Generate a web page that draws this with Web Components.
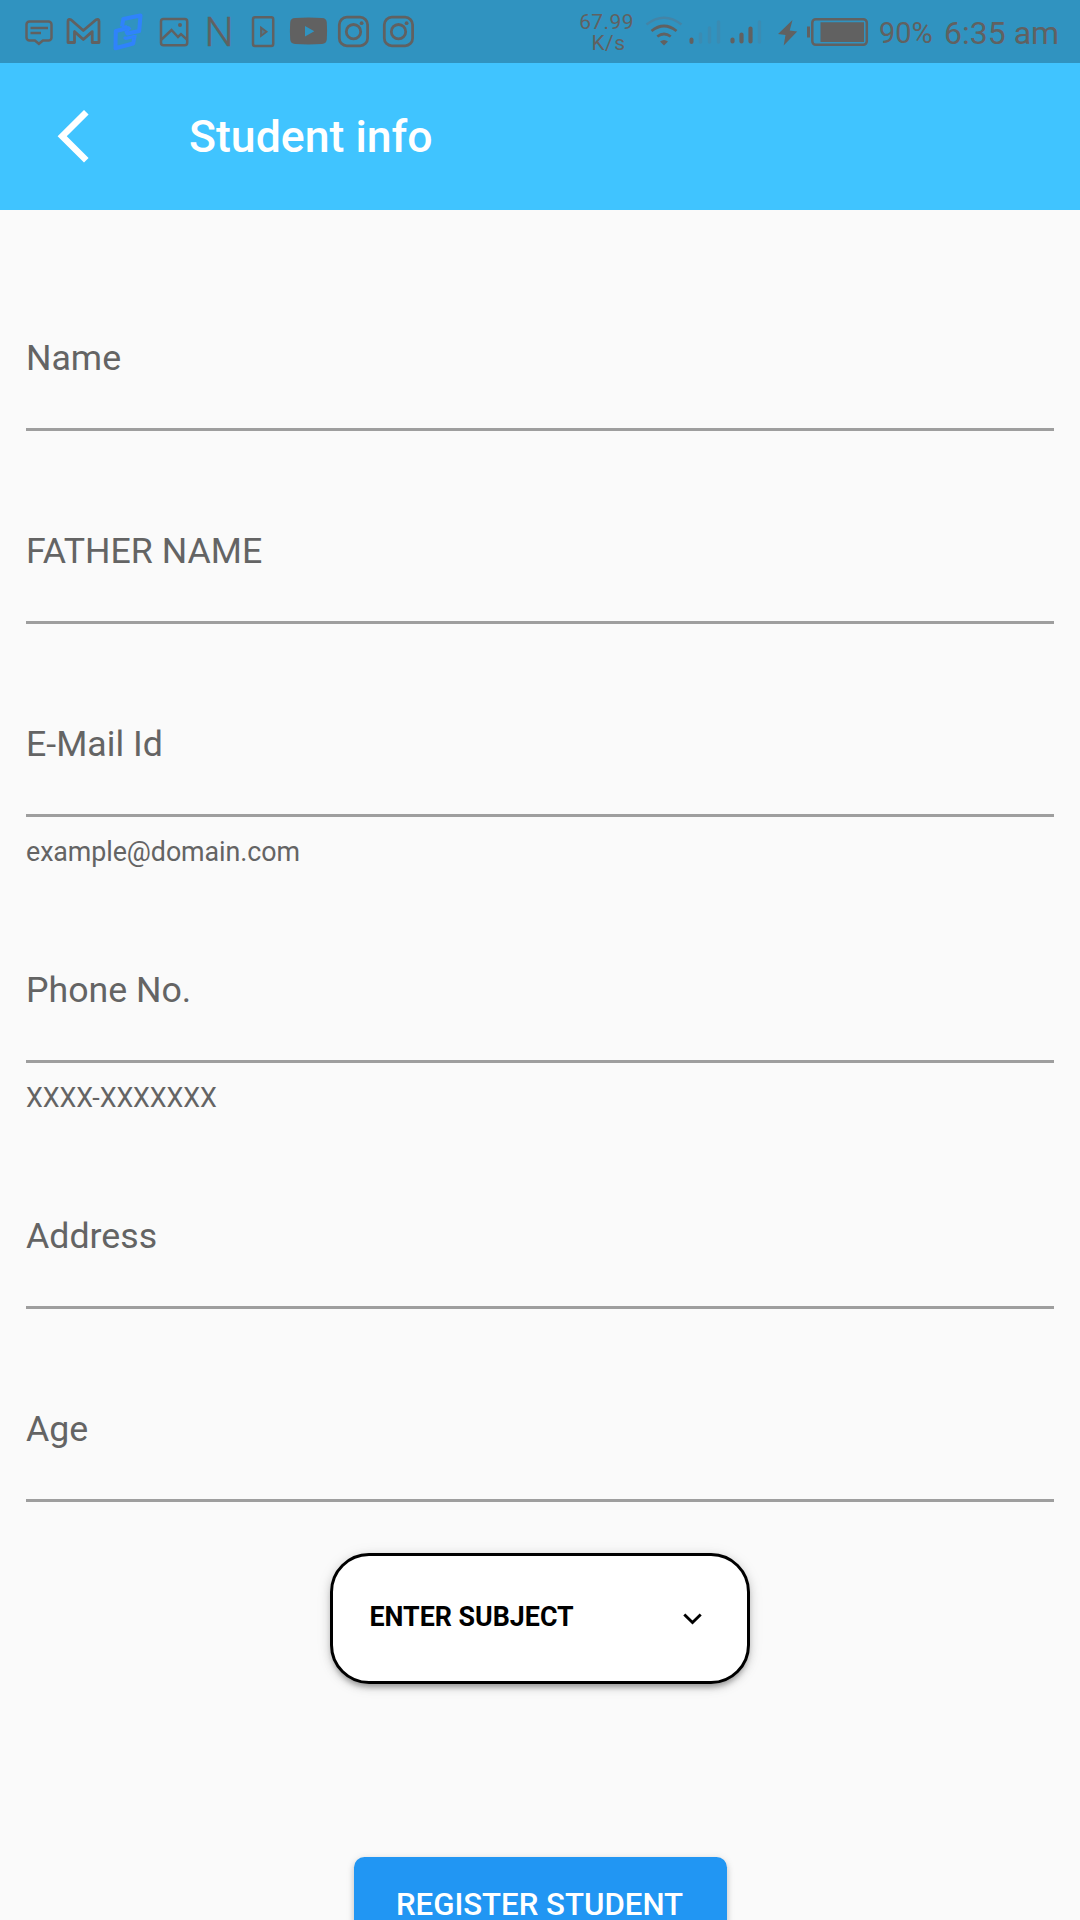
<!DOCTYPE html>
<html lang="en">
<head>
<meta charset="utf-8">
<title>Student info</title>
<style>
html,body{margin:0;height:1920px;overflow:hidden;background:#fafafa;font-family:Roboto,"Liberation Sans",sans-serif}
</style>
</head>
<body>
<student-app></student-app>
<script>
const define = (name, render) => customElements.define(name, class extends HTMLElement {
  connectedCallback() {
    if (this.shadowRoot) return;
    this.attachShadow({ mode: 'open' }).innerHTML = render(this);
  }
});

const glyphs = {
  chat: [20, 40, `<path d="M29.500 21.600h19a3 3 0 0 1 3 3v13a3 3 0 0 1-3 3h-5.600l-4 3.200-4-3.200h-5.400a3 3 0 0 1-3-3v-13a3 3 0 0 1 3-3z"/><path d="M30.500 28h17.500M30.500 33h10.500"/>`],
  mail: [60, 47, `<path stroke-width="2.800" stroke-linejoin="round" d="M68 42.500V21.500q0-3 3-1.700l12.300 10.700L96 19.800q3-1.300 3 1.700v21h-6.800V31.600L83.300 39.500 74.500 31.600v10.900z"/>`],
  link: [107, 46, `<g stroke="#2f83fb" stroke-width="4" stroke-linejoin="round"><path d="M122 26.500l1.300-7.500 17.200-3.500-1.300 15.500-11.700 2.500-1.500-3"/><path d="M134.800 35l-1.600 8.500-17.700 4.800.3-17.300 12.200-3 2 2"/><path stroke-width="3" d="M122 27.500l5-1M134 36.500l-8.500 2-1.500-1.500"/></g>`],
  image: [153, 44, `<rect x="161" y="19" width="26.200" height="26.200" rx="2.500"/><path d="M161.500 39.500l10-9.500 6.500 7 3-2.800 6 5.500"/><circle cx="180" cy="25" r="2" fill="#616161" stroke="none"/>`],
  video: [240, 43, `<rect x="253" y="17.300" width="20.200" height="28.600" rx="2"/><path stroke-width="1.800" d="M261 27.500v8.500l5.600-4.250z" fill="#4d7990"/>`],
  tube: [283, 49, `<path stroke="none" fill="#616161" fill-rule="evenodd" d="M295 18q13.500-.8 27 0 4.500.2 4.800 4.500.6 8.500 0 17-.3 4.200-4.800 4.500-13.500.8-27 0-4.500-.3-4.800-4.500-.6-8.500 0-17 .3-4.300 4.800-4.500zM305 26v10.500l9.300-5.250z"/>`],
  insta: [332, 45, `<rect x="339.300" y="17.200" width="28.300" height="28.600" rx="7.500" stroke-width="2.800"/><circle cx="353.500" cy="31.700" r="7.200" stroke-width="2.800"/><circle cx="361.600" cy="23.200" r="1.900" fill="#616161" stroke="none"/>`],
  wifi: [642, 43, `<path stroke="#4484a6" d="M646.500 24.500q17.500-13.500 35 0"/><path stroke-width="2.700" d="M651.500 31q12.500-10 25 0M657.300 36.500q6.700-5 13.400 0"/><path stroke="none" fill="#616161" d="M660 41.500q4-3 8 0l-4 4z"/>`],
  weak: [685, 39, `<g stroke-width="4" stroke-linecap="round"><path d="M691.500 39.500v2.500"/><g stroke="#3b8bb2" stroke-width="3.500"><path d="M700.500 34v8M709.500 28v14M718.500 22v20"/></g></g>`],
  strong: [724, 44, `<g stroke-width="4.200" stroke-linecap="round"><path d="M732.500 39.500v2M741.500 34.500v7M750.500 28.500v13"/><path stroke="#3b8bb2" stroke-width="3.300" d="M759.500 22v20"/></g>`],
  bolt: [768, 35, `<path stroke="none" fill="#616161" d="M792.500 20l-14.500 14 7.500 1-1.800 10.500 13.500-14-7.500-1z"/>`],
  battery: [803, 76, `<path stroke-width="3" d="M808.500 26.500v11"/><rect x="812.300" y="19.200" width="54.500" height="25.600" rx="3.500" stroke-width="2.500"/><path stroke="none" fill="#616161" d="M820.500 22.200h43.500v19.800h-43.500z"/>`]
};
define('status-glyph', el => {
  const [x, w, art] = glyphs[el.getAttribute('name')];
  return `<style>:host{display:block;flex:none}svg{display:block}</style>
  <svg width="${w}" height="63" viewBox="${x} 0 ${w} 63" fill="none" stroke="#616161" stroke-width="2.500">${art}</svg>`;
});

define('status-bar', () => `<style>
:host{display:flex;flex:none;height:63px;box-sizing:border-box;padding-left:20px;background:#3093c0;color:#616161}
.n{width:43px;box-sizing:border-box;padding-left:1px;text-align:center;font:300 41px/65px Roboto;-webkit-text-stroke:.4px #616161}
.rate{width:59px;margin-left:155px;padding-right:6px;font-size:21px;line-height:21px;padding-top:12px;text-align:center;letter-spacing:.4px}
.unit{display:block;padding-left:4px}
.pct{font-size:29px;line-height:66px;width:65px}
.time{font-size:32px;line-height:66px;white-space:nowrap}
</style>
<status-glyph name="chat"></status-glyph><status-glyph name="mail"></status-glyph><status-glyph name="link"></status-glyph><status-glyph name="image"></status-glyph><div class="n">N</div><status-glyph name="video"></status-glyph><status-glyph name="tube"></status-glyph><status-glyph name="insta"></status-glyph><status-glyph name="insta"></status-glyph>
<div class="rate">67.99<span class="unit">K/s</span></div>
<status-glyph name="wifi"></status-glyph><status-glyph name="weak"></status-glyph><status-glyph name="strong"></status-glyph><status-glyph name="bolt"></status-glyph><status-glyph name="battery"></status-glyph>
<div class="pct">90%</div><div class="time">6:35 am</div>`);

define('app-header', () => `<style>
:host{display:flex;flex:none;align-items:center;height:147px;box-sizing:border-box;padding-left:57px;background:#40c4ff;color:#fff}
svg{display:block;margin-right:100px}
h1{margin:0;font-size:44.600px;font-weight:500;line-height:52px}
</style><svg width="32" height="54" viewBox="0 0 32 54"><path d="M29.300 2.300L5.200 26.300l24.100 24" fill="none" stroke="#fff" stroke-width="6.500"/></svg><h1><slot></slot></h1>`);

define('text-field', el => `<style>
:host{display:block}
.label{padding:99px 0 49px;height:42px;border-bottom:3px solid #9e9e9e;color:#646464;font-size:35.700px;line-height:42px;white-space:nowrap}
.help{height:53px;padding-top:19px;box-sizing:border-box;color:#646464;font-size:26.800px;letter-spacing:-.07px;line-height:32px}
</style><div class="label"><slot></slot></div>${el.hasAttribute('helper') ? `<div class="help">${el.getAttribute('helper')}</div>` : ''}`);

define('subject-select', () => `<style>
:host{display:flex;flex:none;align-items:center;justify-content:space-between;width:420px;height:131px;box-sizing:border-box;border:3px solid #000;border-radius:39px;background:#fff;padding:0 45px 4px 36.500px;font-weight:700;font-size:26.800px;color:#000;
box-shadow:0 5px 5px -2px rgba(0,0,0,.25),0 3px 10px rgba(0,0,0,.16),0 2px 16px rgba(0,0,0,.08)}
svg{display:block;margin-top:4px}
</style><span><slot></slot></span><svg width="19" height="12" viewBox="0 0 19 12"><path d="M1.300 1.500l8.200 8 8.200-8" fill="none" stroke="#000" stroke-width="2.900"/></svg>`);

define('register-button', () => `<style>
:host{display:block;flex:none;width:373px;height:94px;box-sizing:border-box;padding:33px 1px 0 0;border-radius:10.500px;background:#2196f3;color:#fff;font-weight:500;font-size:31.200px;line-height:30px;text-align:center;white-space:nowrap;
box-shadow:0 7px 5px -5px rgba(0,0,0,.2),0 4px 6px rgba(0,0,0,.16),0 1px 8px rgba(0,0,0,.1)}
</style><slot></slot>`);

define('student-app', () => `<style>
:host{display:flex;flex-direction:column;height:1920px;overflow:hidden;background:#fafafa}
main{display:flex;flex:none;flex-direction:column;padding:28px 26px 0}
subject-select{margin:51px auto 173px}
register-button{margin:0 auto}
</style><status-bar></status-bar><app-header>Student info</app-header>
<main><text-field>Name</text-field><text-field>FATHER NAME</text-field><text-field helper="example@domain.com">E-Mail Id</text-field><text-field helper="XXXX-XXXXXXX">Phone No.</text-field><text-field>Address</text-field><text-field>Age</text-field>
<subject-select>ENTER SUBJECT</subject-select><register-button>REGISTER STUDENT</register-button></main>`);
</script>
</body>
</html>
